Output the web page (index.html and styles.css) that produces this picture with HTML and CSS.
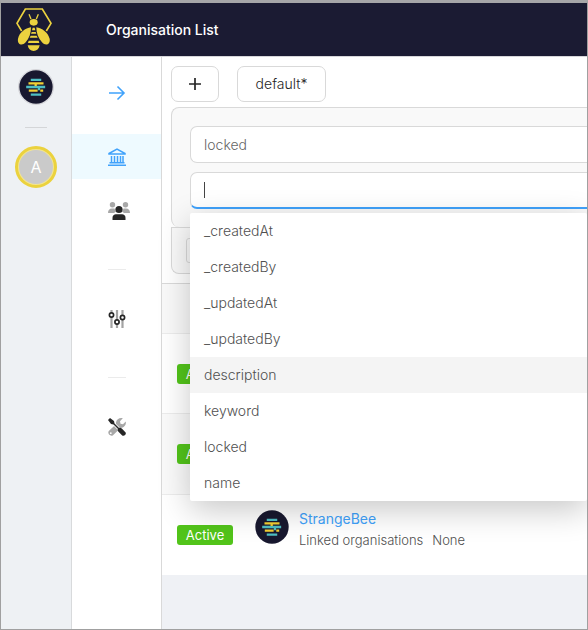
FILE: index.html
```html
<!DOCTYPE html>
<html lang="en">
<head>
<meta charset="utf-8">
<meta name="viewport" content="width=device-width, initial-scale=1">
<title>Organisation List</title>
<link rel="stylesheet" href="styles.css">
</head>
<body>
<svg class="defs" aria-hidden="true">
  <symbol id="hive" viewBox="0 0 104 104">
    <circle cx="52" cy="52" r="51" fill="#18182f"/>
    <g stroke-width="7" fill="none">
      <path stroke="#4fbfc4" d="M36 30H68M22 52H80M36 75H68M61 52V62"/>
      <path stroke="#f3d034" d="M29 41H75M30 63H57M65 63H74M51 41V49"/>
    </g>
  </symbol>
</svg>
<header class="topbar">
  <a class="brand" href="#" aria-label="Home">
    <svg width="38" height="45" viewBox="45 21 114 135" fill="#ecd23f">
      <path d="M65 93L51 70L76 27H127L153 70L139 93" fill="none" stroke="#ecd23f" stroke-width="5"/>
      <path d="M87 43L93 57M115 43L109 57" fill="none" stroke="#ecd23f" stroke-width="4"/>
      <ellipse cx="101" cy="67" rx="12" ry="10"/>
      <path d="M93 82C76 84 58 98 54 116C51 133 66 140 77 127C88 115 93 100 93 82Z"/>
      <path d="M109 82C126 84 144 98 149 116C152 133 137 140 126 127C115 115 109 100 109 82Z"/>
      <path d="M98 83H104L106 91H96ZM95 96H107L109 101H93ZM92 107H110L113 113H89ZM86 122H116L118 129H84ZM83 136H119C117 147 110 153 101 153C92 153 85 147 83 136Z"/>
    </svg>
  </a>
  <h1 class="title">Organisation List</h1>
</header>
<div class="shell">
  <aside class="orgs">
    <a class="org-logo" href="#" aria-label="StrangeBee"><svg width="34" height="34"><use href="#hive"/></svg></a>
    <hr class="org-line">
    <a class="avatar" href="#"><span>A</span></a>
  </aside>
  <nav class="nav">
    <a class="nav-item nav-expand" href="#" aria-label="Expand">
      <svg width="18" height="18" viewBox="0 0 18 18" fill="none" stroke="#40a2fb" stroke-width="1.600"><path d="M1 9H16.500M9.500 2.500L16 9L9.500 15.500"/></svg>
    </a>
    <a class="nav-item active" href="#" aria-label="Organisations">
      <svg width="18" height="18" viewBox="0 0 18 18" fill="none" stroke="#40a2fb"><path stroke-width="1.500" d="M1 5.500L9 1L17 5.500V6H1Z"/><path stroke-width="1.500" d="M3.500 8V14M6.500 8V14M9.500 8V14M12.500 8V14M15 8V14M1.500 14.700H16.500M0 17.200H18"/></svg>
    </a>
    <a class="nav-item nav-users" href="#" aria-label="Users">
      <svg width="22" height="18" viewBox="0 0 22 18"><g fill="#a8a8a8"><circle cx="4.500" cy="2.700" r="2.700"/><circle cx="17.500" cy="2.700" r="2.700"/><path d="M0 11C0 8 1.500 6.500 4 6.500H6.500C7 8 7.500 9 8 9.500L6 11ZM22 11C22 8 20.500 6.500 18 6.500H15.500C15 8 14.500 9 14 9.500L16 11Z"/></g><g fill="#262626"><circle cx="11" cy="7.500" r="3.600"/><path d="M4.500 18V16C4.500 13.500 6 12.300 8 12.300H14C16 12.300 17.500 13.500 17.500 16V18Z"/></g></svg>
    </a>
    <hr class="nav-line">
    <a class="nav-item" href="#" aria-label="Settings">
      <svg width="18" height="18" viewBox="0 0 18 18" fill="#fff"><path stroke="#a3a3a3" stroke-width="2.200" d="M3.500 0V18M9 0V18M14.500 0V18"/><g stroke="#262626" stroke-width="1.700"><circle cx="3.500" cy="5" r="2.100"/><circle cx="9" cy="12" r="2.100"/><circle cx="14.500" cy="7.500" r="2.100"/></g></svg>
    </a>
    <hr class="nav-line">
    <a class="nav-item" href="#" aria-label="Tools">
      <svg width="18" height="18" viewBox="0 0 18 18"><path fill="#a8a8a8" d="M8 4.500C8.500 1.500 11.500-.5 14.800.3L12 3.200L12.500 5.800L15 6.200L17.700 3.500C18.600 6.700 16 10 12.500 9.900L5 17.200C2.500 19-1 15.500.8 13.100L8 6.300Z"/><circle cx="2.800" cy="15.200" r=".9" fill="#fff"/><path stroke="#fff" stroke-width="3" d="M4 4L12 12"/><path fill="#262626" d="M0 2L2 0L6 3L6.500 5.500L10.800 9.800C12 9.500 13 9.800 13.800 10.500L17.400 14.200C19 16 16 19 14.200 17.400L10.500 13.800C9.800 13 9.500 12 9.800 10.800L5.500 6.500L3 6Z"/></svg>
    </a>
  </nav>
  <main class="main">
    <div class="toolbar">
      <button class="btn btn-add" type="button" aria-label="Add"><svg width="12" height="12" viewBox="0 0 12 12" stroke="#262626" stroke-width="1.700"><path d="M0 6H12M6 0V12"/></svg></button>
      <button class="btn btn-view" type="button">default*</button>
    </div>
    <div class="filter-area">
      <section class="filters">
        <input class="field" type="text" value="locked" aria-label="Selected field">
        <div class="combo">
          <input class="field focused" type="text" aria-label="Field name">
          <span class="caret"></span>
          <ul class="menu" role="listbox">
            <li role="option">_createdAt</li>
            <li role="option">_createdBy</li>
            <li role="option">_updatedAt</li>
            <li role="option">_updatedBy</li>
            <li role="option" class="hover">description</li>
            <li role="option">keyword</li>
            <li role="option">locked</li>
            <li role="option">name</li>
          </ul>
        </div>
      </section>
      <div class="filter-actions"><button class="small-btn" type="button" aria-label="Apply"></button></div>
    </div>
    <table class="list">
      <thead><tr><th></th><th></th></tr></thead>
      <tbody>
        <tr><td class="status"><span class="tag">Active</span></td><td></td></tr>
        <tr class="alt"><td class="status"><span class="tag">Active</span></td><td></td></tr>
        <tr>
          <td class="status"><span class="tag">Active</span></td>
          <td>
            <div class="org">
              <svg width="34" height="34"><use href="#hive"/></svg>
              <div>
                <a class="org-name" href="#">StrangeBee</a>
                <div class="org-links"><span>Linked organisations</span><span>None</span></div>
              </div>
            </div>
          </td>
        </tr>
      </tbody>
    </table>
  </main>
</div>
</body>
</html>
```

FILE: styles.css
```css
* { box-sizing: border-box; }

body {
  margin: 0;
  min-height: 100vh;
  display: flex;
  flex-direction: column;
  border: 1px solid #a0a0a0;
  border-top: 3px solid #a6a6a8;
  background: #eff1f5;
  color: #505050;
  font: 300 14px/20px Inter, "Open Sans", sans-serif;
  overflow: hidden;
}

svg { display: block; }
a { text-decoration: none; }
hr { border: 0; height: 1px; }
.defs { position: absolute; width: 0; height: 0; }

.topbar {
  display: flex;
  height: 54px;
  background: #1b1b33;
  border-bottom: 1px solid #d6d6da;
}
.brand { width: 105px; padding: 4px 14px; }
.title { margin: 0; color: #fff; font-size: 14px; line-height: 53px; font-weight: 500; }

.shell { flex: 1; display: flex; }

.orgs {
  width: 71px;
  padding-top: 12px;
  display: flex;
  flex-direction: column;
  align-items: center;
  background: #eef1f4;
  border-right: 1px solid #d8dadc;
}
.org-logo { border: 1px solid #d2d2d6; border-radius: 50%; }
.org-line { width: 22px; margin: 22px 0 18px; background: #d4d6d8; }
.avatar {
  width: 42px;
  height: 42px;
  padding: 1px;
  border: 3px solid #ebd23e;
  border-radius: 50%;
  background: #f3e58f;
}
.avatar span {
  display: block;
  border-radius: 50%;
  background: #cacaca;
  color: #fff;
  font-size: 16px;
  line-height: 34px;
  font-weight: 400;
  text-align: center;
}

.nav {
  width: 90px;
  padding-top: 13px;
  background: #fff;
  border-right: 1px solid #d9d9d9;
}
.nav-item { display: flex; height: 45px; align-items: center; justify-content: center; }
.nav-expand { margin-bottom: 19px; }
.nav-item.active { background: #eefaff; margin-bottom: 9px; }
.nav-users { padding-left: 4px; }
.nav-line { width: 18px; margin: 36px auto 26px; background: #ebebeb; }

.main { flex: 1; min-width: 0; }
.toolbar { display: flex; gap: 18px; padding: 9px 9px 5px; background: #fff; }
.btn {
  display: flex;
  height: 36px;
  align-items: center;
  justify-content: center;
  background: #fff;
  border: 1px solid #d9d9d9;
  border-radius: 7px;
  color: #262626;
  font: 300 14px/20px Inter, "Open Sans", sans-serif;
}
.btn-add { width: 48px; }
.btn-view { width: 89px; }

.filter-area { padding: 0 0 9px 9px; background: #fff; }
.filters, .filter-actions {
  border: 1px solid #d9d9d9;
  border-right: 0;
  background: #f9f9f9;
}
.filters { padding: 18px 0 18px 18px; border-bottom: 0; border-radius: 8px 0 0 8px; }
.field {
  display: block;
  width: 100%;
  height: 37px;
  padding: 0 13px;
  border: 1px solid #d9d9d9;
  border-right: 0;
  border-radius: 7px 0 0 7px;
  background: #fff;
  color: #666;
  font: 300 14px/20px Inter, "Open Sans", sans-serif;
  outline: 0;
}
.combo { position: relative; margin-top: 9px; }
.field.focused { border-bottom: 2px solid #40a2fb; }
.caret { position: absolute; left: 14px; top: 10px; width: 1px; height: 16px; background: #444; }
.menu {
  position: absolute;
  z-index: 2;
  top: 41px;
  left: 0;
  right: 0;
  margin: 0;
  padding: 0;
  list-style: none;
  background: #fff;
  border-radius: 2px;
  box-shadow: 0 9px 32px rgba(0, 0, 0, 0.22);
}
.menu li { height: 36px; padding: 0 14px; line-height: 36px; }
.menu .hover { background: #f4f4f4; }

.filter-actions { height: 47px; padding: 10px 14px; border-radius: 0 0 0 8px; }
.small-btn { display: block; width: 48px; height: 25px; background: #f9f9f9; border: 1px solid #d9d9d9; border-radius: 3px; }

.list { width: 100%; border-collapse: separate; border-spacing: 0; background: #fff; }
.list th { height: 51px; padding: 0; background: #f9f9f9; border-top: 1px solid #d9d9d9; border-bottom: 1px solid #ececec; }
.list td { height: 80px; padding: 0; border-bottom: 1px solid #ececec; }
.list tr:last-child td { border-bottom: 0; }
.list .alt td { height: 81px; background: #fafafa; }
.list .status { width: 93px; padding-left: 15px; }
.tag {
  display: block;
  width: 56px;
  background: #52c41a;
  border-radius: 3px;
  color: #fff;
  font-size: 13px;
  line-height: 20px;
  font-weight: 400;
  text-align: center;
}
.org { display: flex; gap: 10px; height: 50px; }
.org-name { display: block; color: #40a2fb; font-weight: 400; line-height: 18px; }
.org-links { display: flex; gap: 9px; margin-top: 2px; font-size: 13px; }
```
